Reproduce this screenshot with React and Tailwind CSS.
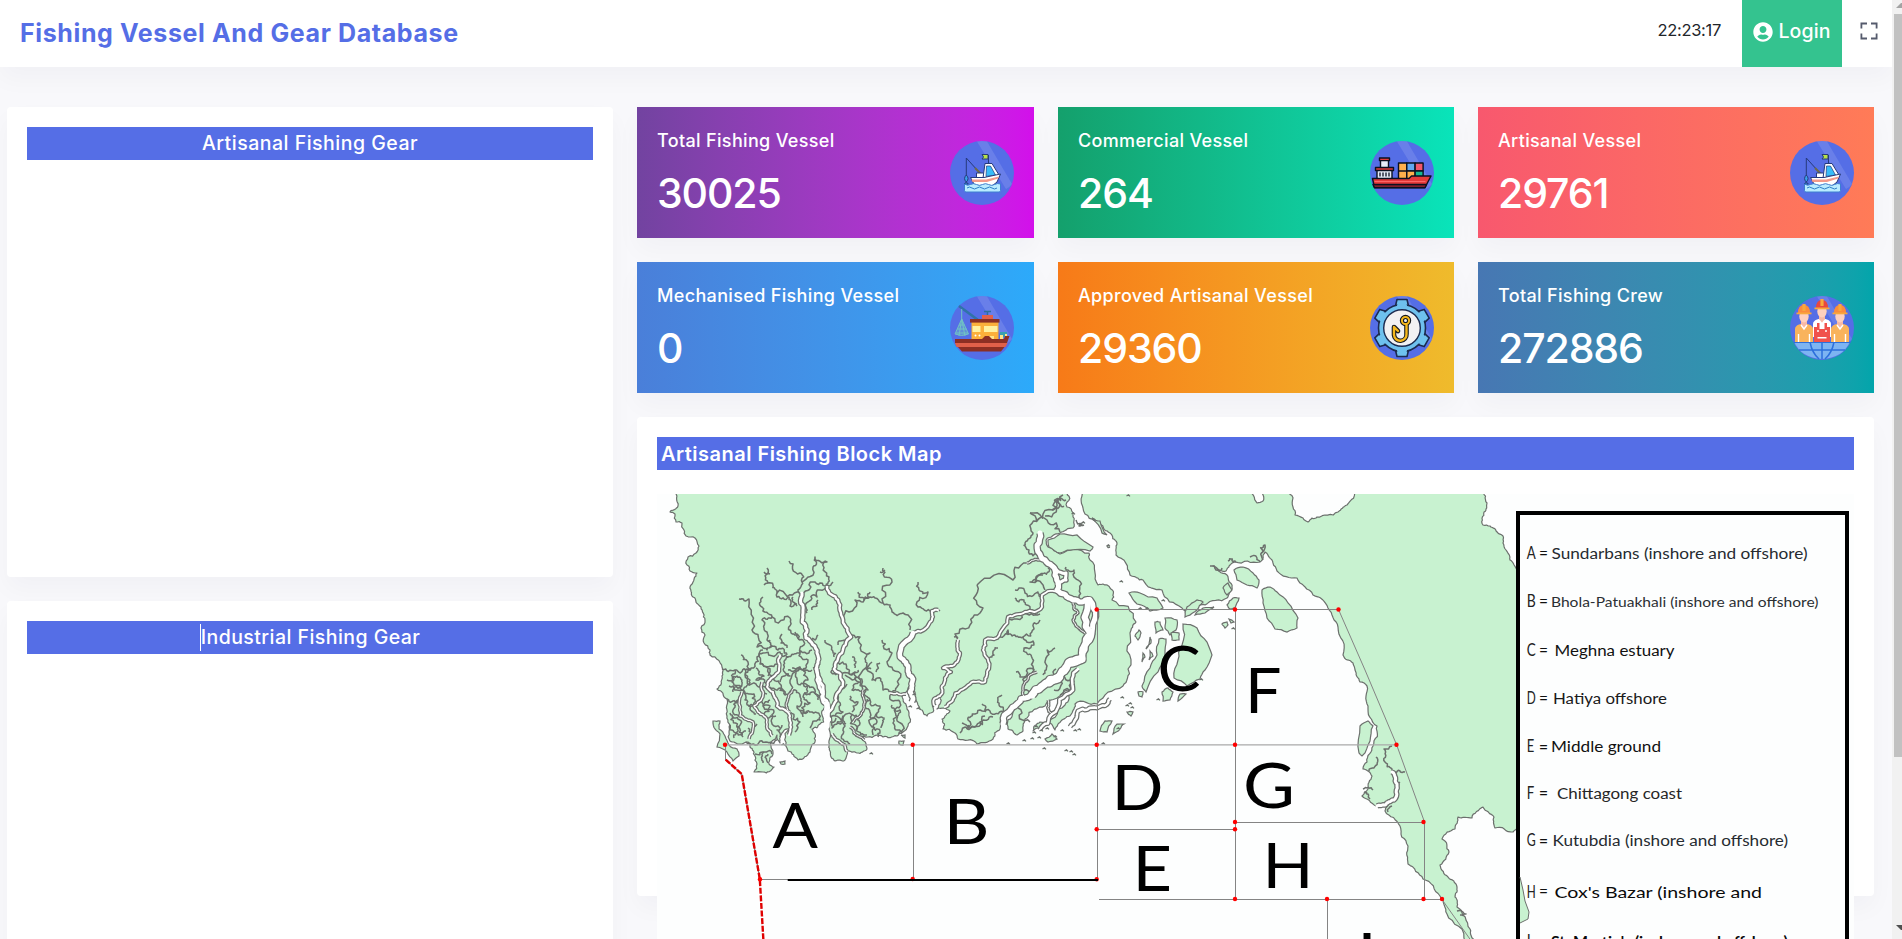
import React from "react";
import { FaUserCircle } from "react-icons/fa";

/* ---------- map geometry ---------- */

function makeRandom(seed) {
  let s = seed;
  return () => {
    s = (s * 16807) % 2147483647;
    return s / 2147483647 - 0.5;
  };
}

// Midpoint displacement turns a coarse polyline into a natural shoreline.
// Segments that lie on the frame of the map stay straight.
function rough(text, amp = 0.3, closed = false, depth = 3) {
  let pts = text.split(" ").map((p) => p.split(",").map(Number));
  const rnd = makeRandom(Math.round(pts[0][0] * 97 + pts[0][1] * 31 + pts.length));
  if (closed) pts.push(pts[0]);
  for (let d = 0; d < depth; d++) {
    const next = [pts[0]];
    for (let i = 1; i < pts.length; i++) {
      const [ax, ay] = pts[i - 1];
      const [bx, by] = pts[i];
      const dx = bx - ax;
      const dy = by - ay;
      const onFrame = (ay <= 492 && by <= 492) || (ax >= 1516 && bx >= 1516);
      if (!onFrame && Math.hypot(dx, dy) > 2.5) {
        const k = rnd() * amp * 2;
        next.push([(ax + bx) / 2 - dy * k, (ay + by) / 2 + dx * k]);
      }
      next.push([bx, by]);
    }
    pts = next;
  }
  return "M" + pts.map((p) => p[0].toFixed(1) + " " + p[1].toFixed(1)).join("L") + (closed ? "Z" : "");
}

const WEST_LAND =
  "677,490 678,506 670,512 675,514 676,522 682,523 684,530 686,536 695,538 699,546 696,553 688,557 687,565 690,571 697,573 691,585 693,597 701,607 705,620 701,628 704,643 710,650 710,655 723,670 722,676 717,689 727,699 727,716 729,732 730,741 740,744 748,742 750,747 755,756 757,764 754,772 763,772 774,767 769,764 773,754 772,741 777,735 780,743 783,732 789,729 788,751 798,760 810,752 815,742 812,729 820,724 824,722 824,708 828,704 831,709 830,732 829,741 830,751 835,761 845,760 847,751 857,753 867,749 860,737 868,737 883,737 897,736 903,732 908,726 907,709 902,696 908,688 912,680 915,692 920,709 927,716 933,712 933,701 942,690 940,704 937,709 950,711 942,719 943,729 955,733 958,739 977,744 993,739 1000,729 1012,708 1025,699 1013,712 1008,729 1017,735 1023,731 1027,718 1045,706 1068,690 1065,705 1040,722 1033,731 1050,723 1055,730 1062,720 1072,713 1075,704 1097,704 1123,686 1128,669 1130,633 1136,622 1112,600 1110,588 1098,585 1090,560 1089,553 1060,554 1048,547 1046,540 1060,533 1073,528 1073,513 1067,507 1067,490";
const EAST_LAND =
  "1084,490 1083,508 1100,524 1110,533 1117,543 1116,555 1130,575 1143,580 1162,590 1182,608 1187,615 1193,604 1205,605 1227,598 1232,587 1227,575 1213,566 1226,571 1235,562 1260,562 1265,552 1273,563 1277,571 1297,578 1313,595 1328,608 1338,627 1343,655 1353,663 1355,670 1360,682 1367,686 1368,706 1377,726 1373,746 1367,762 1363,769 1372,776 1368,789 1362,796 1376,806 1390,802 1385,811 1400,826 1408,846 1408,864 1423,879 1440,896 1447,914 1465,942 1475,942 1470,929 1457,907 1455,897 1457,887 1448,877 1440,865 1449,852 1442,839 1455,829 1458,817 1472,818 1483,807 1494,817 1495,828 1513,832 1518,829 1518,570 1510,560 1506,550 1503,543 1503,536 1498,533 1490,526 1483,525 1484,512 1487,503 1482,490 1358,490 1347,505 1338,512 1317,517 1308,522 1303,518 1295,515 1293,507 1288,490 1261,490 1263,501 1257,503 1248,490";

const ISLANDS = [
  "1048,540 1060,534 1077,535 1093,547 1090,551 1070,550 1060,553 1049,547",
  "1092,518 1100,521 1107,535 1102,533",
  "1129,593 1140,593 1157,598 1163,608 1150,611 1137,604",
  "1183,624 1197,628 1207,642 1212,655 1205,670 1200,679 1187,686 1174,678 1178,660 1182,645",
  "1159,639 1166,639 1165,655 1158,672 1146,692 1142,686 1150,668 1157,655",
  "1165,618 1177,620 1176,630 1170,635 1165,628",
  "1171,633 1179,633 1179,640 1172,640",
  "1155,622 1160,622 1163,630 1156,633",
  "1139,630 1141,633 1138,640 1135,636",
  "1150,637 1151,643 1146,649",
  "1143,653 1145,657 1142,662",
  "1150,651 1153,656 1149,660",
  "1185,617 1187,607 1197,600 1203,602 1197,610 1187,616",
  "1195,615 1203,608 1214,607 1205,613",
  "1227,605 1233,598 1239,598 1235,608 1230,609",
  "1234,570 1243,567 1253,573 1259,580 1257,588 1247,585 1237,580",
  "1262,590 1270,587 1277,592 1288,603 1298,618 1297,628 1287,632 1275,629 1267,618 1263,603",
  "1223,588 1228,583 1232,590 1227,595",
  "1222,624 1227,622 1228,625 1225,628",
  "1229,619 1234,622 1231,623",
  "1162,692 1168,688 1173,692 1170,700 1163,701",
  "1178,701 1180,694 1186,694",
  "1138,692 1143,692 1142,697 1139,696",
  "1100,731 1105,721 1112,721 1107,732",
  "1113,734 1117,724 1124,724 1120,729",
  "1127,712 1133,712 1131,716",
  "1360,726 1368,721 1373,726 1370,741 1362,756 1359,753",
  "713,721 720,721 719,729 725,736 729,745 737,749 739,756 733,761 727,752 717,747 720,734 715,729",
  "780,762 785,761 785,764 781,764",
  "1045,739 1052,734 1057,739 1048,742",
  "899,741 904,741 903,745 899,744",
  "901,735 905,735 905,738",
];

const RIVERS = [
  ["802,593 803,613 807,630 806,638 817,653 816,669 823,686 827,706", 5],
  ["817,669 821,690 828,705 827,716", 5],
  ["827,587 838,600 843,620 851,637 842,653 834,669 843,682 836,696 829,712", 4.4],
  ["938,610 932,611 930,622 913,633", 4],
  ["913,633 900,657 908,670 913,679 910,692 912,702", 6.5],
  ["958,640 960,653 955,664 943,668 951,672 942,686 940,696 934,699 935,706", 3.8],
  ["1060,592 1042,595 1042,607 1025,612 1008,617 997,638 985,640 983,650 989,669 985,682 970,684 953,699 945,707", 3.8],
  ["1040,533 1041,557 1055,570 1057,590 1073,600 1090,600 1092,633 1083,660 1058,676 1030,696 1015,706 1003,724", 7],
  ["1089,600 1091,634 1081,660", 8],
  ["1082,658 1064,670 1052,681 1032,695", 9],
  ["1055,568 1066,573 1066,580 1057,584", 5],
  ["1078,669 1073,690 1052,714 1040,730", 4.5],
  ["1110,699 1097,708 1078,711 1070,727", 4.5],
  ["1073,603 1078,613 1073,620 1085,633", 3],
  ["780,656 779,669 770,680 767,687 773,692 777,706 790,716 791,727 789,735", 4],
  ["742,692 740,716 753,722 749,739", 3.2],
  ["762,682 763,695 754,706 758,712 767,720 772,736", 3.4],
  ["793,689 787,702 790,712", 3],
  ["832,734 840,742 847,751", 3.4],
  ["850,727 860,737 864,740", 3],
  ["863,690 865,702 860,716 853,722", 3],
  ["890,693 897,693 906,694", 3.4],
  ["1041,560 1030,562 1027,563", 3],
  ["1392,772 1397,784 1394,800 1385,805 1377,806", 5],
  ["1037,672 1025,682 1024,696", 3],
  ["1048,700 1052,714", 3],
];

const CREEKS = [
  "767,568 768,583 773,585 777,593 797,592 802,595",
  "764,572 770,574", "768,583 764,585",
  "789,561 800,573 802,582 799,593",
  "802,582 813,567 815,557 827,562 829,577 827,587",
  "802,593 813,582 827,585 833,582",
  "827,587 817,597 808,602 807,613",
  "777,593 777,597 789,597 790,606 797,604",
  "739,599 749,599 752,630 757,647 767,650 778,650 787,655",
  "763,597 762,607 772,617 762,620 767,632 767,640 771,648",
  "772,617 790,618 791,633 799,640",
  "843,617 855,600 870,597 883,603 892,612 903,613 910,630",
  "883,568 892,582 883,603", "880,572 885,570", "858,592 864,600 870,592",
  "918,582 919,590 928,592 918,607 932,610 940,611",
  "852,635 860,637 870,653 867,663 868,690 862,693",
  "882,640 892,653 893,670 897,687 892,693",
  "845,675 857,677 862,693", "872,662 872,680 882,682 883,690 892,694", "866,670 867,666 871,669",
  "807,637 815,640 818,635", "825,640 830,645 834,657",
  "977,585 983,608 970,625 958,640", "958,638 954,637",
  "1027,563 1013,580 977,585",
  "1030,513 1053,510 1063,495", "1030,513 1047,520 1060,532", "1045,516 1058,500 1064,506", "1052,510 1060,498 1066,500",
  "1040,518 1033,533 1025,543 1029,550 1040,555",
  "1015,590 1019,588 1025,593 1038,592 1040,597", "1015,598 1024,600 1030,610 1038,613",
  "1008,617 1023,612 1040,614", "997,635 1008,630 1012,636 1023,637 1034,629 1040,620",
  "1023,637 1033,641 1024,648 1031,655 1034,670 1020,677 1016,672",
  "1034,670 1024,678 1024,690", "1024,690 1038,690",
  "1055,648 1046,658 1047,666 1043,675", "998,648 994,655 989,658",
  "1066,567 1074,570 1078,580 1079,598", "1045,590 1030,582 1040,575 1048,568",
  "722,669 735,670 740,673 750,670 757,657 763,653 780,652 788,657 797,653 812,650",
  "760,663 778,664", "735,670 732,682 742,690", "741,655 748,662 745,675 756,684 765,687",
  "763,650 760,664 768,676", "782,634 781,643 787,648", "788,657 784,668 790,676 780,682",
  "788,670 800,667 812,670", "800,667 797,680 806,684 803,697 810,703 803,717",
  "795,632 803,640 800,652 808,660 803,670 792,668", "805,692 815,693 822,700",
  "727,699 738,700 733,710 742,716", "727,680 737,676 742,684 733,692", "729,686 742,690 745,700 752,706",
  "745,669 750,680 744,688 754,694 749,706 756,714", "756,668 764,676 756,680 768,684",
  "768,669 772,676 780,684 785,694 792,690", "770,687 780,688 786,695",
  "795,672 792,690 800,696 797,706 808,712", "804,669 808,680 804,686 815,690 818,700",
  "800,710 812,712 820,720 810,728", "790,712 800,722 795,732", "770,700 763,706 774,712 772,724 780,728",
  "767,694 760,700 770,706 764,714 776,716",
  "730,713 740,720 737,727 743,737", "733,716 738,728 734,738", "757,724 752,734 748,728", "730,725 736,733 746,731",
  "746,742 760,741 772,743 777,740", "755,754 764,752 772,754", "764,752 763,763", "768,754 768,763",
  "832,670 842,675 855,672 860,682 852,690 863,694", "847,684 838,700 843,712 835,716",
  "830,717 853,715 860,723 857,730", "850,696 858,702 852,712", "866,690 870,700 865,707 870,712 877,722 873,735",
  "877,713 872,727 880,731 878,737", "870,700 880,706 877,713 884,718 881,728",
  "890,695 900,702 895,712 902,724 899,734", "892,705 900,710 893,723 902,733", "852,715 856,730 867,735",
  "836,718 832,728 845,726 842,735 850,744", "837,723 843,716 846,724",
  "960,733 968,720 975,714 990,711 1003,712",
  "968,725 980,722 993,717", "962,723 974,727 985,716", "1003,712 999,705 1002,695", "985,712 982,704",
  "1018,708 1030,722", "1056,669 1060,680 1054,690", "1060,695 1070,680 1064,676",
  "1043,575 1035,582", "780,737 777,730 782,725", "845,640 838,645", "835,660 846,664 849,672 858,670",
  "855,668 852,657", "876,672 877,664 880,663", "813,668 820,664", "793,597 797,606", "812,610 818,600",
  "1392,746 1384,749 1385,762 1392,769 1396,773", "1395,773 1405,772", "1376,757 1374,768 1369,771",
  "1400,782 1396,786", "1363,789 1373,790", "1364,792 1370,799", "1388,812 1392,806",
  "1261,553 1265,545 1263,560", "1228,561 1236,562", "1250,557 1257,558 1260,562", "1210,566 1216,570 1222,568",
  "1245,575 1251,576 1247,580", "1170,625 1175,628", "1457,911 1466,914 1460,915", "1076,520 1082,524 1079,526 1084,525",
  "1107,546 1110,547",
];

const SPECKS = [
  [1073, 514], [1083, 523], [1108, 546], [1121, 582], [1163, 601], [1140, 609], [1147, 609], [1024, 741], [1034, 733],
  [1041, 731], [1047, 729], [1055, 737], [1066, 751], [1071, 752], [1074, 755], [1044, 749], [1079, 730], [914, 695], [910, 707],
  [918, 709], [871, 754], [1008, 744], [1127, 706], [1130, 704], [1122, 698], [1103, 744], [1158, 700], [1201, 680], [1128, 496],
  [1075, 731], [1032, 739], [1039, 738], [1233, 629], [1132, 708], [1118, 729], [783, 745], [1036, 727], [1062, 731],
];

const GRID_LINES =
  "M1097.5 609.5H1338 M1097.5 609V880 M1235.5 609V899 M1338.5 609.5L1365 670L1396.5 744.5L1424.5 822V899 M1235.5 822.5H1424 M1097.5 829.5H1235.5 M1099 899.5H1442L1472 942 M913.5 744V879 M760 879.5H788 M1327.5 899V942 M725.5 744V760";

const NODES = [
  [1096.7, 609.5], [1235, 609.5], [1338.5, 609.5], [725, 744.7], [912.7, 744.7], [1096.7, 744.7], [1235, 744.7],
  [1396.5, 744.7], [1235, 822], [1423.5, 822], [1096.7, 829.3], [1235, 829.3], [760, 879.3], [912.7, 879], [1096.7, 879.3],
  [1235, 899], [1327, 899], [1423.5, 899], [1442, 899],
];

// letter, left, baseline, drawn width
const BLOCK_LETTERS = [
  ["A", 772.5, 848, 45.5], ["B", 943.5, 844, 46], ["C", 1157.5, 691.3, 43], ["D", 1111.5, 809.8, 52],
  ["E", 1132.5, 891, 39.5], ["F", 1245, 713, 36.5], ["G", 1243, 807.5, 52], ["H", 1262.5, 888, 51], ["I", 1357, 978, 20],
];

const LEGEND = [
  ["A", "Sundarbans (inshore and offshore)", 559, 1551.5, 256, 15.5, "#262b30"],
  ["B", "Bhola-Patuakhali (inshore and offshore)", 607.3, 1551, 267.5, 13.8, "#2b2f33"],
  ["C", "Meghna estuary", 656.3, 1554.5, 120, 14.5, "#111"],
  ["D", "Hatiya offshore", 704, 1553, 114, 14.5, "#1a1a1a"],
  ["E", "Middle ground", 752.3, 1551, 110, 15, "#111"],
  ["F", "Chittagong coast", 798.7, 1557, 125, 14.5, "#262626"],
  ["G", "Kutubdia (inshore and offshore)", 846, 1552.5, 235.5, 14.5, "#262b30"],
  ["H", "Cox's Bazar (inshore and", 897.7, 1554.5, 207.5, 16, "#0a0a0a"],
  ["I", "St. Martin's (inshore and offshore)", 946.5, 1551, 237, 15, "#0a0a0a"],
];

const land = "#c8f2d0";
const shore = "#6c706d";

function BlockMap() {
  return (
    <svg viewBox="657 494 1197 460" className="block h-[460px] w-[1197px] shrink-0 bg-[#fdfefe]">
      <g fill={land} stroke={shore} strokeWidth="1.2" strokeLinejoin="round">
        <path d={rough(WEST_LAND, 0.2, true)} />
        <path d={rough(EAST_LAND, 0.15, true)} />
      </g>
      <g fill="none" stroke={shore} strokeWidth="1.5" strokeLinejoin="round">
        {CREEKS.map((c, i) => <path key={i} d={rough(c, 0.36)} />)}
        {RIVERS.map(([c, w], i) => <path key={i} d={rough(c, 0.17)} strokeWidth={w + 0.5} />)}
      </g>
      <g fill="none" stroke="#fff" strokeLinejoin="round" strokeLinecap="round">
        {RIVERS.map(([c, w], i) => <path key={i} d={rough(c, 0.17)} strokeWidth={w - 2} />)}
        <path d="M827 704V726" strokeWidth="5.5" />
      </g>
      <g fill={land} stroke={shore} strokeWidth="1.2">
        {ISLANDS.map((c, i) => <path key={i} d={rough(c, 0.1, true, 2)} />)}
        {SPECKS.map(([x, y], i) => <path key={i} d={`M${x - 1.5} ${y}l2 -1.2l1.5 1.6`} />)}
      </g>

      <path d="M725 744.8H1396" stroke="#a9a9a9" strokeWidth="1.2" />
      <path d={GRID_LINES} fill="none" stroke="#848484" strokeWidth="1" />
      <path d="M725.7 759.7L741.7 774L759.8 879" fill="none" stroke="#777" strokeWidth="1.2" />
      <path d="M725.7 759.7L741.7 774L759.8 879L763.5 942" fill="none" stroke="#e00000" strokeWidth="2.4" strokeDasharray="6 1.6" />
      {NODES.map(([x, y], i) => <circle key={i} cx={x} cy={y} r="2.2" fill="#f00" />)}
      <path d="M787.7 880H1098" stroke="#000" strokeWidth="2" />

      <g fontFamily="Lato, 'Liberation Sans', sans-serif" fontSize="62.5" fill="#000">
        {BLOCK_LETTERS.map(([ch, x, y, w]) => (
          <text key={ch} x={x} y={y} textLength={w} lengthAdjust="spacingAndGlyphs">{ch}</text>
        ))}
      </g>

      <path d="M1518 960V513H1847V960" fill="#fdfefe" stroke="#000" strokeWidth="4" />
      <path d="M1520 877L1523 890L1525 901L1529 912L1528 919L1520 923" fill={land} stroke={shore} strokeWidth="1" />
      <g fontFamily="Lato, 'Liberation Sans', sans-serif">
        {LEGEND.map(([ch, label, y, x, w, size, color]) => (
          <React.Fragment key={ch}>
            <text x="1526.8" y={y} fontSize="16.5" fill="#222" textLength={ch === "I" ? 4 : "EF".includes(ch) ? 7.5 : 9} lengthAdjust="spacingAndGlyphs">{ch}</text>
            <text x={ch === "I" ? 1534 : 1539} y={y - 0.5} fontSize="15" fontWeight={"EFGI".includes(ch) ? 700 : 400} fill="#111" textLength="9" lengthAdjust="spacingAndGlyphs">=</text>
            <text x={x} y={y} fontSize={size} fill={color} fontWeight={ch === "I" ? 700 : 400} textLength={w} lengthAdjust="spacingAndGlyphs">{label}</text>
          </React.Fragment>
        ))}
      </g>
    </svg>
  );
}

/* ---------- statistic badges ---------- */

function Badge({ children }) {
  return (
    <svg viewBox="0 0 64 64" className="size-16 shrink-0">
      <circle cx="32" cy="32" r="32" fill="#556ee6" />
      <path d="M27 .4Q32 -.3 37 .4L62 43Q60 46 56 48Z" fill="#fff" opacity=".12" />
      {children}
    </svg>
  );
}

function FishingBoat() {
  return (
    <Badge>
      <g stroke="#263a7c" strokeWidth="1" strokeLinejoin="round">
        <path d="M16.3 17V35M16.3 17L28 30" fill="none" />
        <path d="M25 27l6 6" stroke="#6d6a4a" strokeWidth="2" />
        <path d="M16.3 34q-3.500 3.500 0 7l-2 2h4l-2-2q3.500-3.500 0-7Z" fill="#3aa0e8" />
        <path d="M38.500 22V14" fill="none" />
        <path d="M32.500 13.500h6v4.500h-6l1.500-2z" fill="#b6e04a" transform="translate(-.5 0)" />
        <path d="M26.500 32h7v5h-7z" fill="#fff" />
        <path d="M35 22.500h7L49 34l-1 3H33z" fill="#fff" />
        <path d="M36.500 25h4l5 9-9.500 1.500z" fill="#38bdf8" strokeWidth=".7" />
        <path d="M20.500 36.500H34L50.500 33L47 41L42 45H25Z" fill="#fff" />
      </g>
      <path d="M21.300 38.500H36L49 35.500l-.8 2L37 41H22.500Z" fill="#f49a8a" />
      <path d="M14.500 43q3 2.200 6 .5t6 0t6 0t6 0t6 0t6-.5V49.500a1.500 1.500 0 0 1-1.500 1.500H16a1.500 1.500 0 0 1-1.500-1.500Z" fill="#b9ecff" stroke="#3d7fd0" strokeWidth="1" />
      <path d="M17 47q2.500-2 5 0t5 0t5 0t5 0t5 0t5 0" fill="none" stroke="#2e7fc8" strokeWidth="1" />
    </Badge>
  );
}

function CargoShip() {
  return (
    <Badge>
      <g stroke="#0b1020" strokeWidth="1.400" strokeLinejoin="round">
        <path d="M10.500 19h8v9h-8z" fill="#e6ecf8" />
        <path d="M9.500 17h10v2.600h-10z" fill="#e43a3a" />
        <path d="M7 29h15v9H7z" fill="#e6ecf8" />
        <path d="M5.500 26.500h18v3h-18z" fill="#e43a3a" />
        <path d="M10 31.500v4M13 31.500v4M16 31.500v4M19 31.500v4" strokeWidth="1.300" />
        <path d="M28.500 22h8.300v8h-8.300zM28.500 30h8.300v8h-8.300z" fill="#ffb04c" />
        <path d="M36.800 22h8.300v8h-8.300z" fill="#62a8f0" />
        <path d="M36.800 30h8.300v8h-8.300z" fill="#ffb04c" />
        <path d="M45.100 22h8v8h-8z" fill="#f4566a" />
        <path d="M45.100 30h8v7h-8z" fill="#16b890" />
        <path d="M2.500 37.500H39L41.500 35H61L55 46.500H4.500Z" fill="#e43a3a" />
        <path d="M3 43.500h53.500l-1.500 3.300H4.500z" fill="#7d1f2b" />
      </g>
      <path d="M4.500 40.500h51" stroke="#ff7272" strokeWidth=".8" />
    </Badge>
  );
}

function Trawler() {
  return (
    <Badge>
      <path d="M9 10L28 24" stroke="#2f73a8" strokeWidth="2.600" />
      <g fill="none" stroke="#71c3c4" strokeWidth="1">
        <path d="M11.700 13V24M11.700 23L5 38q6.500 3 13.500 0Z" fill="#71c3c466" />
        <path d="M11.700 23L9 40M11.700 23L15 40M9 29h5.500M7.500 33h9M6 37h12" />
      </g>
      <path d="M37.500 19v-4M34 15.500h7" stroke="#2d6f9c" strokeWidth="1.500" />
      <path d="M32 19h11v4.500H32z" fill="#e0604a" />
      <path d="M21.500 26h27v18h-27z" fill="#fbb03b" />
      <path d="M20 23h29.500v3.600H20z" fill="#8c2f24" />
      <path d="M22.500 30h8v6h-8zM34 30h13.500v6H34z" fill="#fff2a0" />
      <circle cx="25.500" cy="39.500" r="1" fill="#fff" /><circle cx="29.500" cy="39.500" r="1" fill="#fff" />
      <path d="M50 36h7v5h-7z" fill="#3aa0b0" />
      <path d="M39 40h5v4h-5zM50 39h3v4h-3zM55 38h2v4h-2z" fill="#ffe58a" />
      <path d="M5 43H32l3-3h4l3 3H54l1-3h4.500L57 47H5Z" fill="#8c2f24" />
      <path d="M5 47h52.500l-2 4H6.500z" fill="#e0604a" />
      <path d="M8 51h46.500l-3.500 4.500H12z" fill="#8c2f24" />
    </Badge>
  );
}

function GearHook() {
  const teeth = [0, 60, 120, 180, 240, 300];
  return (
    <Badge>
      <g stroke="#1c2b50" strokeWidth="1.600" strokeLinejoin="round">
        {teeth.map((a) => (
          <path key={a} d="M25 12L27 3.500H37L39 12Z" fill="#6ec1ee" transform={`rotate(${a} 32 32)`} />
        ))}
        <circle cx="32" cy="32" r="23.500" fill="#6ec1ee" />
      </g>
      {teeth.map((a) => (
        <path key={a} d="M26.500 12.500L28 5H36L37.500 12.500Z" fill="#6ec1ee" transform={`rotate(${a} 32 32)`} />
      ))}
      <circle cx="32" cy="32" r="18.300" fill="#f1f1f3" stroke="#1c2b50" strokeWidth="1.400" />
      <g fill="none" strokeLinecap="round" strokeLinejoin="round">
        <circle cx="35.500" cy="24.500" r="3.600" stroke="#15191f" strokeWidth="4.200" />
        <path d="M36.500 29V38a6 6 0 0 1-12.500 1V31l4 4" stroke="#15191f" strokeWidth="4.600" />
        <circle cx="35.500" cy="24.500" r="3.600" stroke="#f5b81c" strokeWidth="2" />
        <path d="M36.500 29V38a6 6 0 0 1-12.500 1V31l4 4" stroke="#f5b81c" strokeWidth="2.400" />
      </g>
    </Badge>
  );
}

function Worker({ x, y, coat, helmet, brim }) {
  return (
    <g transform={`translate(${x} ${y})`}>
      <path d="M-9 30V17q0-3 4-4.500L0 11l5 1.500q4 1.500 4 4.500V30Z" fill={coat} />
      <path d="M-3 7h6v6l-3 4l-3-4z" fill="#f7b9a6" />
      <ellipse cx="0" cy="4.500" rx="4.700" ry="6" fill="#ffd0bd" />
      <path d="M-6 1q0-8 6-8t6 8z" fill={helmet} />
      <path d="M-7.500 .5h15v1.800h-15z" fill={brim} />
      <path d="M-1.600-8h3.200V-1h-3.200z" fill={brim} />
      <path d="M-3 13L0 17l3-4M-5.500 22V30M5.500 22V30" stroke="#fff" strokeWidth="1.400" fill="none" />
    </g>
  );
}

function Crew() {
  return (
    <Badge>
      <path d="M4 45.500H60Q53 62 32 63Q11 62 4 45.500Z" fill="#7db4f2" />
      <path d="M3.500 46.300H60.500M9 54H55M32 46V63M20 46Q22 57 29 63M44 46Q42 57 35 63" stroke="#2c6fdc" strokeWidth="1.500" fill="none" />
      <Worker x={14} y={16} coat="#f9b35c" helmet="#fb8c3c" brim="#f9a83c" />
      <Worker x={50} y={16} coat="#f9b35c" helmet="#fb8c3c" brim="#f9a83c" />
      <Worker x={32} y={11} coat="#fff" helmet="#e9483f" brim="#f9a83c" />
      <path d="M24 46V31h3V27h2.500v6h5V27H37v4h3V46Z" fill="#f0524c" />
      <path d="M27.500 41h9v1.500h-9z" fill="#fff" /><circle cx="28" cy="35" r="1" fill="#fff" /><circle cx="36" cy="35" r="1" fill="#fff" />
    </Badge>
  );
}

/* ---------- page ---------- */

const STATS = [
  { label: "Total Fishing Vessel", value: "30025", Icon: FishingBoat, bg: "bg-linear-to-r from-[#7243a0] to-[#d30feb]" },
  { label: "Commercial Vessel", value: "264", Icon: CargoShip, bg: "bg-linear-to-r from-[#14a06c] to-[#09e4ba]" },
  { label: "Artisanal Vessel", value: "29761", Icon: FishingBoat, bg: "bg-linear-to-r from-[#f8586e] to-[#ff7b57]" },
  { label: "Mechanised Fishing Vessel", value: "0", Icon: Trawler, bg: "bg-linear-to-r from-[#4a7fd9] to-[#2caafa]" },
  { label: "Approved Artisanal Vessel", value: "29360", Icon: GearHook, bg: "bg-linear-to-r from-[#f77a18] to-[#efbb2c]" },
  { label: "Total Fishing Crew", value: "272886", Icon: Crew, bg: "bg-linear-to-r from-[#4777b3] to-[#02a5ab]" },
];

function StatCard({ label, value, Icon, bg }) {
  return (
    <div className={`flex h-[131px] items-center justify-between px-5 text-white shadow-[0_12px_24px_rgba(18,38,63,0.03)] ${bg}`}>
      <div className="flex h-full flex-col pt-[21px]">
        <p className="h-[26px] text-[18px] leading-[26px] font-medium tracking-[0.34px] whitespace-nowrap">{label}</p>
        <p className="mt-3.5 text-[41px] leading-[50px] font-medium tracking-[-1.1px]">{value}</p>
      </div>
      <Icon />
    </div>
  );
}

function Bar({ children, className = "" }) {
  return (
    <h4 className={`flex h-[33px] items-center bg-[#556ee6] text-white ${className}`}>{children}</h4>
  );
}

export default function App() {
  return (
    <div className="flex h-[939px] w-[1902px] overflow-hidden bg-[#f8f8fb] font-['Inter','Liberation_Sans',sans-serif]">
      <div className="flex w-[1892px] shrink-0 flex-col">
        <header className="flex h-[67px] shrink-0 items-center bg-white pl-5 shadow-[0_12px_24px_rgba(18,38,63,0.03)]">
          <h1 className="text-[25px] font-bold tracking-[0.62px] whitespace-nowrap text-[#556ee6]">Fishing Vessel And Gear Database</h1>
          <div className="ml-auto flex h-full items-center">
            <span className="mr-[21px] mb-[7px] text-[16.5px] tracking-[-0.3px] text-[#212529]">22:23:17</span>
            <button className="flex h-full w-[100px] items-center justify-center gap-[5px] bg-[#34c38f] pb-[3px] text-[19.5px] font-medium text-white">
              <FaUserCircle className="size-[20px]" />
              <span className="tracking-[0.1px]">Login</span>
            </button>
            <svg viewBox="0 0 18 18" className="mr-[14px] ml-[18px] mb-[6px] size-[18px]" fill="none" stroke="#555b6d" strokeWidth="1.800">
              <path d="M1.400 6.500V1.500H7M11 1.500H16.600V6.500M16.600 11.500V16.500H11M7 16.500H1.400V11.500" />
            </svg>
          </div>
        </header>

        <main className="flex gap-6 pt-10 pr-[18px] pl-[7px]">
          <div className="flex w-[606px] shrink-0 flex-col gap-6">
            <section className="h-[470px] rounded bg-white p-5 shadow-[0_12px_24px_rgba(18,38,63,0.03)]">
              <Bar className="justify-center text-[19.5px] font-medium tracking-[0.5px]">Artisanal Fishing Gear</Bar>
            </section>
            <section className="h-[470px] rounded bg-white p-5 shadow-[0_12px_24px_rgba(18,38,63,0.03)]">
              <Bar className="justify-center text-[19.5px] font-medium tracking-[0.45px]">
                <span className="h-[27px] w-px bg-white" />
                Industrial Fishing Gear
              </Bar>
            </section>
          </div>

          <div className="flex w-[1237px] shrink-0 flex-col gap-6">
            <div className="grid grid-cols-[397px_396px_396px] gap-6">
              {STATS.map((s) => <StatCard key={s.label} {...s} />)}
            </div>
            <section className="flex h-[479px] flex-col gap-6 rounded bg-white p-5 shadow-[0_12px_24px_rgba(18,38,63,0.03)]">
              <Bar className="shrink-0 pl-1 text-[20px] font-semibold tracking-[0.48px]">Artisanal Fishing Block Map</Bar>
              <BlockMap />
            </section>
          </div>
        </main>
      </div>

      <div className="flex w-[10px] shrink-0 flex-col bg-[#f1f1f1] pl-0.5">
        <svg viewBox="0 0 8 14" className="h-[14px] w-2"><path d="M2 8L7 3H8V8Z" fill="#a3a3a3" /></svg>
        <div className="h-[743px] bg-[#c1c1c1]" />
        <svg viewBox="0 0 8 14" className="mt-auto h-[14px] w-2"><path d="M2 0H8V5H7Z" fill="#505050" /></svg>
      </div>
    </div>
  );
}
